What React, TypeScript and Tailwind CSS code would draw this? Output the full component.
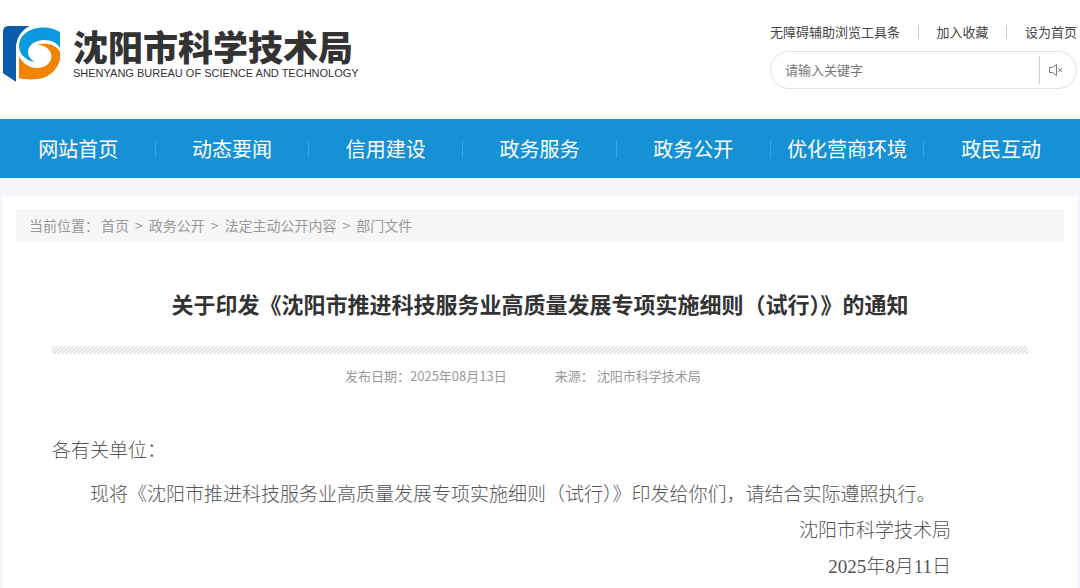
import { Fragment, useState } from 'react';

const topLinks = ['无障碍辅助浏览工具条', '加入收藏', '设为首页'];

const navItems = [
  '网站首页',
  '动态要闻',
  '信用建设',
  '政务服务',
  '政务公开',
  '优化营商环境',
  '政民互动',
];

const crumbs = ['首页', '政务公开', '法定主动公开内容', '部门文件'];

function Emblem() {
  return (
    <svg viewBox="9 20 174 168" className="w-[58px] h-14 shrink-0" aria-hidden="true">
      <path d="M9 36Q11 21 24 20H88Q54 38 48 78V187L9 162Z" fill="#0a5cad" />
      <path
        d="M180 38C164 27 140 22 118 25C82 29 57 50 57 80C57 103 74 122 103 128C90 118 83 108 84 97C86 77 104 64 128 62C152 61 171 69 180 86Z"
        fill="#0b9ae0"
      />
      <path
        d="M112 76C136 69 168 74 180 98V120C172 156 140 179 106 180C88 181 70 180 57 177V110C66 132 90 147 114 146C140 145 157 127 154 107C151 89 134 77 112 76Z"
        fill="#f08300"
      />
    </svg>
  );
}

function Header() {
  const [keyword, setKeyword] = useState('');

  return (
    <header className="flex items-start justify-between px-[3px] h-[119px]">
      <a href="#" className="flex items-start gap-3 pt-[26px]">
        <Emblem />
        <div className="text-[#333]">
          <div className="text-[35px] leading-10 font-black whitespace-nowrap">
            沈阳市科学技术局
          </div>
          <div className="font-['Liberation_Sans'] text-[11px] leading-[14px] whitespace-nowrap">
            SHENYANG BUREAU OF SCIENCE AND TECHNOLOGY
          </div>
        </div>
      </a>

      <div className="w-[307px] pt-[22px]">
        <div className="flex items-center justify-between text-[13px] leading-5 text-[#444]">
          {topLinks.map((link, i) => (
            <Fragment key={link}>
              {i > 0 && <span className="w-px h-[14px] bg-[#ccc]" />}
              <a href="#">{link}</a>
            </Fragment>
          ))}
        </div>
        <form
          className="mt-[9px] flex items-center h-[38px] rounded-full border border-[#e2e2e2]"
          onSubmit={(e) => e.preventDefault()}
        >
          <input
            type="text"
            aria-label="请输入关键字"
            placeholder="请输入关键字"
            value={keyword}
            onChange={(e) => setKeyword(e.target.value)}
            className="flex-1 min-w-0 pl-[14px] text-[13px] outline-none placeholder:text-[#757575]"
          />
          <button
            type="button"
            aria-label="语音"
            className="w-[37px] h-7 pl-2 border-l border-[#ccc] text-[#777]"
          >
            <svg viewBox="0 0 16 14" className="w-4 h-[14px]" fill="none" stroke="currentColor">
              <path d="M1.5 4.5H4.5L8.5 1.5V12.5L4.5 9.5H1.5Z" />
              <path d="M10.5 5L14 9M14 5L10.5 9" />
            </svg>
          </button>
        </form>
      </div>
    </header>
  );
}

function Navbar() {
  return (
    <nav className="bg-[#1791d5] px-[2px]">
      <ul className="grid grid-cols-7 items-center h-[59px]">
        {navItems.map((item) => (
          <li
            key={item}
            className="flex items-center justify-center h-[18px] border-r border-[#2fa6e6] last:border-r-0"
          >
            <a href="#" className="text-xl text-white whitespace-nowrap">
              {item}
            </a>
          </li>
        ))}
      </ul>
    </nav>
  );
}

function Breadcrumb() {
  return (
    <div className="flex items-center h-8 px-[13px] rounded bg-[#f6f6f6] text-sm text-[#999]">
      <span className="pr-[2px]">当前位置：</span>
      <div className="flex items-center gap-[6px]">
        {crumbs.map((crumb, i) => (
          <Fragment key={crumb}>
            {i > 0 && <span>&gt;</span>}
            <a href="#">{crumb}</a>
          </Fragment>
        ))}
      </div>
    </div>
  );
}

function Article() {
  return (
    <article className="px-9 pt-11">
      <h1 className="text-[22px] leading-9 font-bold text-center text-[#333]">
        关于印发《沈阳市推进科技服务业高质量发展专项实施细则（试行）》的通知
      </h1>
      <div className="mt-[25px] h-2 bg-[linear-gradient(135deg,#e0e0e0_25%,#fafafa_25%_50%,#e0e0e0_50%_75%,#fafafa_75%)] bg-[length:4px_4px]" />
      <div className="mt-3 flex gap-12 pl-[293px] text-[13px] leading-5 text-[#999]">
        <span>发布日期：2025年08月13日</span>
        <span>来源： 沈阳市科学技术局</span>
      </div>
      <div className="mt-[47px] font-['Liberation_Serif','Noto_Sans_CJK_SC',serif] text-[19px] leading-9 font-light text-[#555]">
        <p>各有关单位：</p>
        <p className="mt-2 indent-[2em]">
          现将《沈阳市推进科技服务业高质量发展专项实施细则（试行）》印发给你们，请结合实际遵照执行。
        </p>
        <div className="pr-[77px] text-right">
          <p>沈阳市科学技术局</p>
          <p>2025年8月11日</p>
        </div>
      </div>
    </article>
  );
}

export default function App() {
  return (
    <div
      lang="zh-CN"
      className="min-h-screen flex flex-col bg-white font-['Noto_Sans_CJK_SC',sans-serif]"
    >
      <Header />
      <Navbar />
      <main className="flex-1 flex flex-col bg-[#f6f6fa] px-[3px] pt-[18px]">
        <div className="flex-1 bg-white px-[13px] pt-[13px]">
          <Breadcrumb />
          <Article />
        </div>
      </main>
    </div>
  );
}
